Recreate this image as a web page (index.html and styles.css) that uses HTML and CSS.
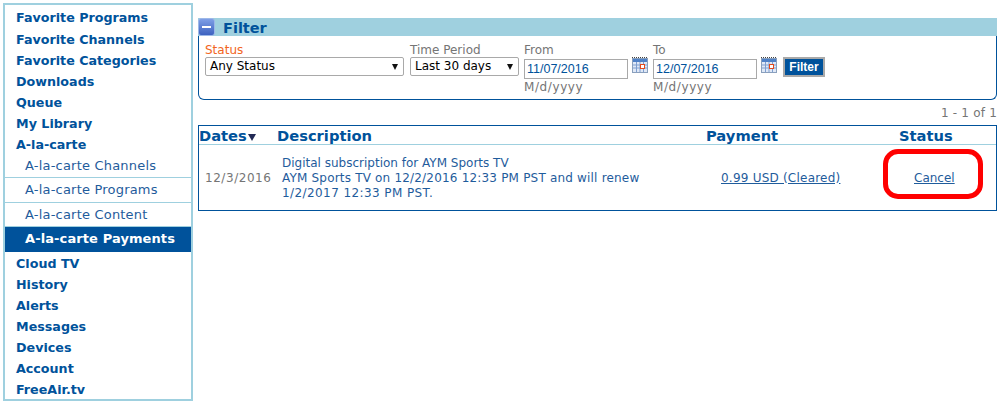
FILE: index.html
```html
<!DOCTYPE html>
<html lang="en">
<head>
<meta charset="utf-8">
<title>A-la-carte Payments</title>
<link rel="stylesheet" href="styles.css">
</head>
<body>
<nav class="sidebar">
  <a class="nav-item first">Favorite Programs</a>
  <a class="nav-item">Favorite Channels</a>
  <a class="nav-item">Favorite Categories</a>
  <a class="nav-item">Downloads</a>
  <a class="nav-item">Queue</a>
  <a class="nav-item">My Library</a>
  <a class="nav-item">A-la-carte</a>
  <a class="sub-item first-sub">A-la-carte Channels</a>
  <a class="sub-item">A-la-carte Programs</a>
  <a class="sub-item">A-la-carte Content</a>
  <a class="sub-item active">A-la-carte Payments</a>
  <a class="nav-item first-after">Cloud TV</a>
  <a class="nav-item">History</a>
  <a class="nav-item">Alerts</a>
  <a class="nav-item">Messages</a>
  <a class="nav-item">Devices</a>
  <a class="nav-item">Account</a>
  <a class="nav-item">FreeAir.tv</a>
</nav>
<main class="content">
  <div class="filter-bar">
    <span class="collapse"><span class="minus"></span></span>
    <h2 class="filter-title">Filter</h2>
  </div>
  <section class="filter-box">
    <div class="field">
      <label class="label status-label">Status</label>
      <div class="select select-status">Any Status<span class="arrow"></span></div>
    </div>
    <div class="field">
      <label class="label">Time Period</label>
      <div class="select select-period">Last 30 days<span class="arrow"></span></div>
    </div>
    <div class="field date-field">
      <label class="label">From</label>
      <div class="input">11/07/2016</div>
      <span class="hint">M/d/yyyy</span>
    </div>
    <svg class="cal" viewBox="0 0 16 16" aria-hidden="true">
      <rect x="0.5" y="1.5" width="15" height="14" fill="#dfe8f6" stroke="#8aa0bd"/>
      <rect x="1" y="2" width="14" height="3" fill="#4f81c7"/>
      <path d="M0 0.5h16" stroke="#444" stroke-dasharray="1 1"/>
      <path d="M1 8h14M1 11h14M4.5 5v10M8 5v10M11.5 5v10" stroke="#7f9fd0"/>
      <rect x="8.5" y="7.5" width="4" height="4" fill="#fff" stroke="#e2491d"/>
    </svg>
    <div class="field date-field to-field">
      <label class="label">To</label>
      <div class="input">12/07/2016</div>
      <span class="hint">M/d/yyyy</span>
    </div>
    <svg class="cal" viewBox="0 0 16 16" aria-hidden="true">
      <rect x="0.5" y="1.5" width="15" height="14" fill="#dfe8f6" stroke="#8aa0bd"/>
      <rect x="1" y="2" width="14" height="3" fill="#4f81c7"/>
      <path d="M0 0.5h16" stroke="#444" stroke-dasharray="1 1"/>
      <path d="M1 8h14M1 11h14M4.5 5v10M8 5v10M11.5 5v10" stroke="#7f9fd0"/>
      <rect x="8.5" y="7.5" width="4" height="4" fill="#fff" stroke="#e2491d"/>
    </svg>
    <button class="filter-btn" type="button">Filter</button>
  </section>
  <div class="pager">1 - 1 of 1</div>
  <div class="table-wrap">
    <table class="payments">
      <colgroup>
        <col class="c-date"><col class="c-desc"><col class="c-pay"><col class="c-status">
      </colgroup>
      <thead>
        <tr>
          <th class="th-date">Dates<span class="sort"></span></th>
          <th>Description</th>
          <th class="th-pay">Payment</th>
          <th class="th-status">Status</th>
        </tr>
      </thead>
      <tbody>
        <tr>
          <td class="td-date">12/3/2016</td>
          <td class="td-desc"><span class="line">Digital subscription for AYM Sports TV</span><span class="line line-2">AYM Sports TV on 12/2/2016 12:33 PM PST and will renew</span><span class="line line-3">1/2/2017 12:33 PM PST.</span></td>
          <td class="td-pay"><a class="link pay-link">0.99 USD (Cleared)</a></td>
          <td class="td-status"><a class="link">Cancel</a></td>
        </tr>
      </tbody>
    </table>
    <div class="highlight"></div>
  </div>
</main>
</body>
</html>
```
FILE: styles.css
```css
* { box-sizing: border-box; }
html, body { margin: 0; padding: 0; }
body {
  width: 1007px;
  height: 414px;
  background: #fff;
  padding: 3px 10px 0 3px;
  display: flex;
  align-items: flex-start;
  gap: 5px;
  overflow: hidden;
  font-family: "DejaVu Sans", Verdana, sans-serif;
  font-size: 12px;
  color: #757575;
}
.sidebar {
  width: 190px;
  height: 398px;
  border: 2px solid #9fd0df;
  padding-top: 3px;
  display: flex;
  flex-direction: column;
  flex: none;
}
.nav-item {
  flex: none;
  height: 21px;
  line-height: 21px;
  padding-left: 11px;
  font-size: 12.7px;
  font-weight: bold;
  color: #00529b;
  white-space: nowrap;
}
.nav-item.first { line-height: 19px; }
.sub-item {
  flex: none;
  height: 24.5px;
  line-height: 23px;
  padding-left: 20px;
  font-size: 13px;
  letter-spacing: 0.2px;
  color: #1f5c9c;
  border-bottom: 1px solid #9fd0df;
  white-space: nowrap;
}
.first-sub { margin-top: -1.5px; }
.sub-item.active {
  background: #00529b;
  color: #fff;
  font-weight: bold;
  letter-spacing: 0.1px;
  border-bottom: 0;
}
.first-after { margin-top: 1.5px; }
.content { flex: 1; min-width: 0; padding-top: 15px; }
.filter-bar {
  height: 18px;
  background: #9fd0df;
  display: flex;
  align-items: center;
}
.collapse {
  width: 17px;
  height: 18px;
  border: 1px solid #9db8e8;
  border-radius: 3px;
  background: linear-gradient(#7f9fe6, #3d62c0);
  display: flex;
  align-items: center;
  justify-content: center;
  flex: none;
}
.minus { width: 9px; height: 2px; background: #fff; }
.filter-title {
  margin: 0 0 0 8px;
  padding-top: 2px;
  font-size: 14.5px;
  line-height: 16px;
  font-weight: bold;
  color: #00529b;
}
.filter-box {
  height: 64px;
  border: 1px solid #00529b;
  border-top: 0;
  border-radius: 0 0 6px 6px;
  padding: 7px 0 0 6px;
  display: flex;
  align-items: flex-start;
}
.field { display: flex; flex-direction: column; margin-right: 5px; }
.field:nth-child(1) { margin-right: 6px; }
.label { font-size: 12px; line-height: 14px; height: 14px; color: #757575; }
.status-label { color: #f26522; }
.select {
  position: relative;
  height: 19px;
  border: 1px solid #a9a9a9;
  border-radius: 2px;
  padding-left: 4px;
  line-height: 17px;
  font-family: "DejaVu Sans", sans-serif;
  font-size: 12px;
  color: #000;
}
.select-status { width: 199px; }
.select-period { width: 109px; }
.arrow {
  position: absolute;
  right: 5px;
  top: 6px;
  border-left: 3.5px solid transparent;
  border-right: 3.5px solid transparent;
  border-top: 6px solid #111;
}
.date-field { margin-right: 4px; }
.to-field { margin-left: 5px; }
.input {
  width: 104px;
  height: 20px;
  margin-top: 2px;
  border: 1px solid #a9a9a9;
  padding-left: 2px;
  line-height: 18px;
  font-family: "Liberation Sans", Arial, sans-serif;
  font-size: 12.5px;
  color: #00529b;
}
.hint { font-size: 12px; line-height: 14px; margin-top: 1px; color: #757575; letter-spacing: 0.6px; }
.cal { width: 16px; height: 16px; margin-top: 14px; flex: none; }
.filter-btn {
  width: 42px;
  height: 20px;
  margin: 14px 0 0 6px;
  padding: 0;
  border: 2px solid #a9a9a9;
  background: #00529b;
  color: #fff;
  font-family: "Liberation Sans", Arial, sans-serif;
  font-size: 12px;
  font-weight: bold;
  line-height: 14px;
}
.pager {
  height: 25px;
  padding-top: 6px;
  text-align: right;
  font-size: 12px;
  line-height: 14px;
  letter-spacing: 0.2px;
  color: #757575;
}
.table-wrap { position: relative; }
.payments {
  width: 100%;
  height: 86px;
  border: 1px solid #00529b;
  border-collapse: separate;
  border-spacing: 0;
  table-layout: fixed;
}
.c-date { width: 78px; }
.c-desc { width: 429px; }
.c-pay { width: 193px; }
.payments th {
  height: 19px;
  padding: 2px 0 0;
  text-align: left;
  font-size: 14.7px;
  line-height: 16px;
  font-weight: bold;
  color: #00529b;
  border-bottom: 1px solid #9fd0df;
}
.sort {
  display: inline-block;
  margin-left: 1px;
  border-left: 4px solid transparent;
  border-right: 4px solid transparent;
  border-top: 7px solid #222a55;
}
.payments td { padding: 2px 0 0; font-size: 12px; line-height: 15px; vertical-align: middle; }
.payments .td-date { padding-left: 6px; color: #757575; letter-spacing: 0.55px; }
.payments .td-desc { padding-left: 5px; color: #1f5c9c; white-space: nowrap; }
.line { display: block; }
.line-2 { letter-spacing: 0.19px; }
.line-3 { letter-spacing: 0.41px; }
.payments .td-pay { padding-left: 15px; }
.payments .td-status { padding-left: 15px; }
.link { color: #1f5c9c; text-decoration: underline; white-space: nowrap; }
.pay-link { letter-spacing: 0.22px; }
.highlight {
  position: absolute;
  left: 685px;
  top: 24px;
  width: 100px;
  height: 50px;
  border: 5px solid #f00;
  border-radius: 15px;
}
```
